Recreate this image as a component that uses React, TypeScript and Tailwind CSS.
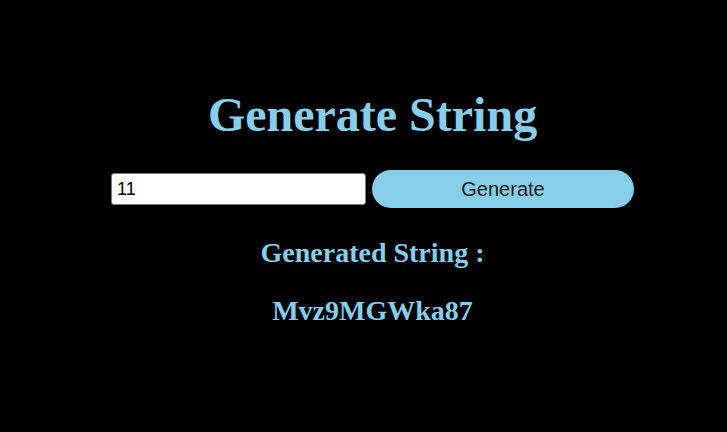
import React, { useState } from 'react';

const chars = 'ABCDEFGHIJKLMNOPQRSTUVWXYZabcdefghijklmnopqrstuvwxyz0123456789';

export default function App() {
  const [length, setLength] = useState('11');
  const [result, setResult] = useState('Mvz9MGWka87');

  const generate = () => {
    const n = parseInt(length, 10) || 0;
    let s = '';
    for (let i = 0; i < n; i++) s += chars[Math.floor(Math.random() * chars.length)];
    setResult(s);
  };

  return (
    <div className="min-h-[432px] bg-black flex flex-col items-center pl-[18px] text-[#87ceeb] font-['Liberation_Serif',serif]">
      <h1 className="mt-[88px] text-[48px] leading-[53px] font-bold">Generate String</h1>

      <div className="mt-[29px] flex items-center gap-[6px]">
        <input
          type="text"
          value={length}
          onChange={(e) => setLength(e.target.value)}
          className="w-[255px] h-[32px] bg-white border border-[#767676] rounded-[3px] px-[5px] text-[18px] text-black font-['Liberation_Sans',sans-serif] outline-none"
        />
        <button
          onClick={generate}
          className="w-[262px] h-[38px] rounded-full bg-[#87ceeb] text-[20px] text-[#1a1a1a] font-['Liberation_Sans',sans-serif]"
        >
          Generate
        </button>
      </div>

      <h2 className="mt-[29px] text-[28px] leading-[31px] font-bold">Generated String :</h2>
      <p className="mt-[27px] text-[28px] leading-[31px] font-bold">{result}</p>
    </div>
  );
}
